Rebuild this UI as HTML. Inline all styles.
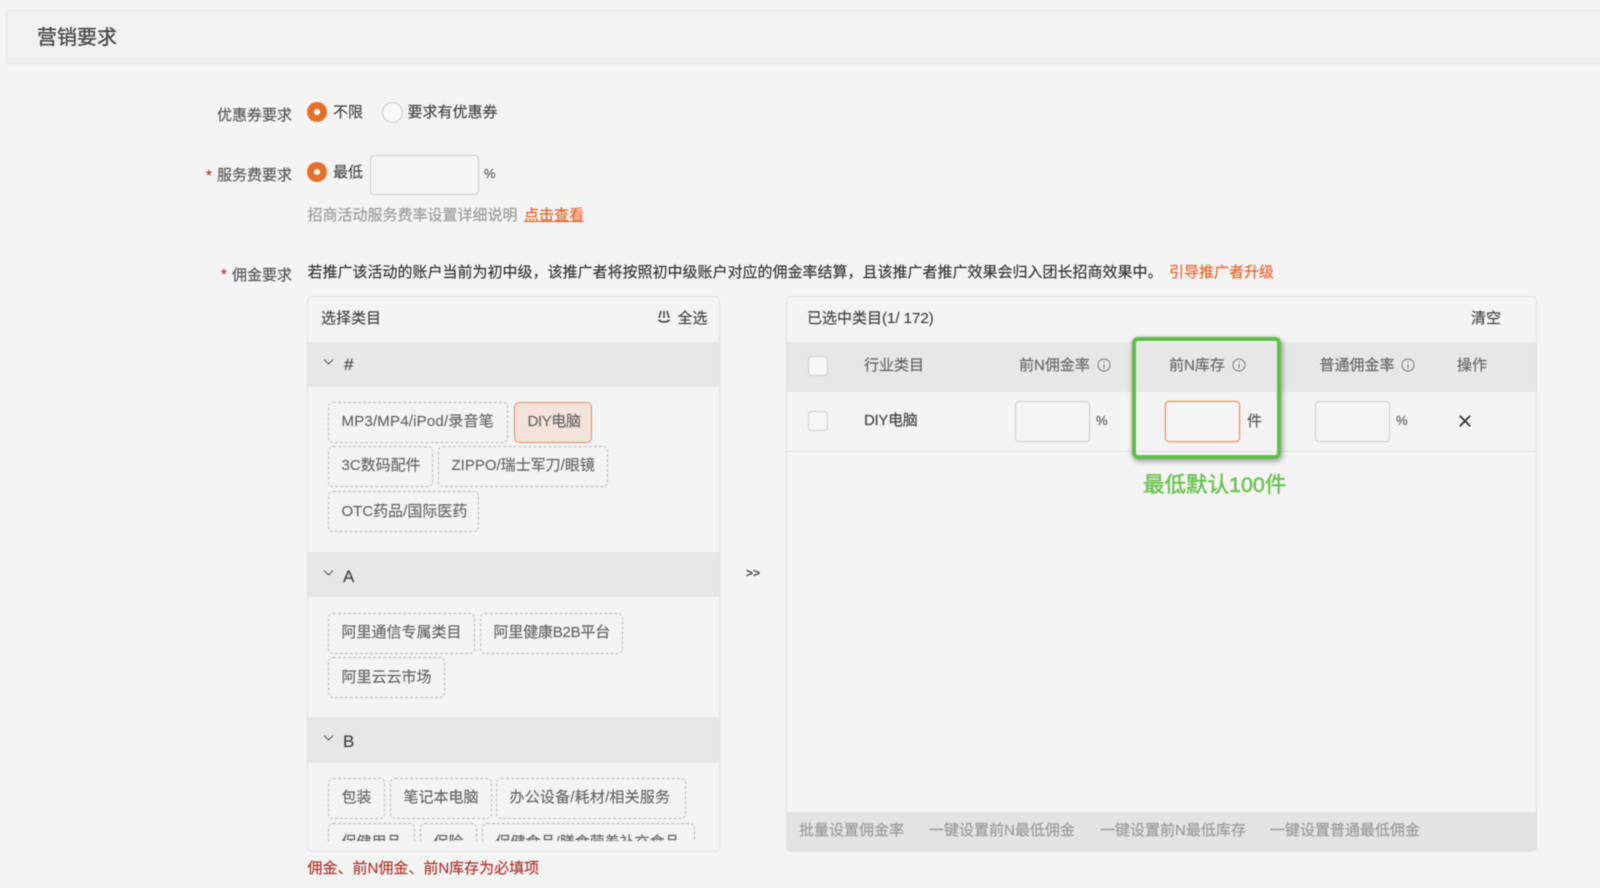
<!DOCTYPE html>
<html lang="zh">
<head>
<meta charset="utf-8">
<title>营销要求</title>
<style>
html,body{margin:0;padding:0;width:1600px;height:888px;overflow:hidden;background:#f4f4f4}
#p{position:relative;width:1600px;height:888px;overflow:hidden;background:#f4f4f4;font-family:"Liberation Sans","Noto Sans CJK SC",sans-serif;font-size:15px;color:#555;filter:blur(.4px)}
.t{position:absolute;white-space:nowrap;line-height:20px;height:20px;-webkit-text-stroke:.15px currentColor}
.b{position:absolute;box-sizing:border-box}
.hd{position:absolute;background:#e7e7e7}
.tag{position:absolute;box-sizing:border-box;height:41px;line-height:38px;border:1px dashed #b8b8b8;border-radius:5px;padding-left:12.5px;color:#666;white-space:nowrap;overflow:hidden;-webkit-text-stroke:.15px currentColor}
.inp{position:absolute;box-sizing:border-box;border:1px solid #cfcfd4;border-radius:4px;background:#f5f5f5;height:41px;width:75px}
.cb{position:absolute;box-sizing:border-box;width:20px;height:20px;border:1px solid #cfcfd4;border-radius:4px;background:#f6f6f6}
.r{position:absolute;width:20px;height:20px;border-radius:50%;background:#e4702c}
.r:after{content:"";position:absolute;left:7px;top:7px;width:6px;height:6px;border-radius:50%;background:#fff}
.st{color:#a8362d}
svg{position:absolute;overflow:visible}
</style>
</head>
<body>
<div id="p">
  <div class="b" style="left:6px;top:10px;width:1610px;height:54px;background:#f1f1f1;border:1px solid #e3e3e3;border-radius:3px"></div>
  <div class="t" style="left:37px;top:28px;font-size:20px;color:#444;-webkit-text-stroke:.3px #444">营销要求</div>

  <div class="t" style="left:217px;top:106px">优惠券要求</div>
  <div class="r" style="left:307px;top:102px"></div>
  <div class="t" style="left:333px;top:103px;color:#444">不限</div>
  <div class="b" style="left:382px;top:102px;width:21px;height:21px;border:1px solid #c8c8ce;border-radius:50%;background:#f8f8f8"></div>
  <div class="t" style="left:407.5px;top:103px;color:#444">要求有优惠券</div>

  <div class="t st" style="left:206px;top:166px">*</div>
  <div class="t" style="left:217px;top:166px">服务费要求</div>
  <div class="r" style="left:307px;top:162px"></div>
  <div class="t" style="left:333px;top:163px;color:#444">最低</div>
  <div class="inp" style="left:370px;top:155px;width:109px;height:40px"></div>
  <div class="t" style="left:484px;top:164px;font-size:13px">%</div>
  <div class="t" style="left:307.5px;top:206px;color:#999">招商活动服务费率设置详细说明</div>
  <div class="t" style="left:524px;top:206px;color:#e8622a;text-decoration:underline">点击查看</div>

  <div class="t st" style="left:221px;top:265px">*</div>
  <div class="t" style="left:232px;top:266px">佣金要求</div>
  <div class="t" style="left:307.5px;top:263px;color:#333">若推广该活动的账户当前为初中级，该推广者将按照初中级账户对应的佣金率结算，且该推广者推广效果会归入团长招商效果中。</div>
  <div class="t" style="left:1169px;top:263px;color:#e8622a">引导推广者升级</div>

  <!-- left panel -->
  <div class="b" style="left:307px;top:296px;width:413px;height:556px;border:1px solid #e2e2e2;border-radius:5px;background:#f4f4f4"></div>
  <div class="t" style="left:321px;top:309px;color:#444">选择类目</div>
  <svg style="left:657px;top:310px" width="14" height="14" viewBox="0 0 14 14" fill="none" stroke="#333" stroke-width="1.4"><path d="M4 1 L2 8 M7 1 V8 M10 1 L12 8 M1.5 10 Q7 14 12.5 10"/></svg>
  <div class="t" style="left:677.5px;top:309px;color:#444">全选</div>

  <div class="hd" style="left:308px;top:342px;width:411px;height:45px"></div>
  <svg style="left:323px;top:358px" width="11" height="8" viewBox="0 0 11 8" fill="none" stroke="#555" stroke-width="1.1"><path d="M1 1.5 L5.5 6 L10 1.5"/></svg>
  <div class="t" style="left:344px;top:355px;font-size:17px;color:#444">#</div>
  <div class="tag" style="left:328px;top:402px;width:180px;letter-spacing:.2px">MP3/MP4/iPod/录音笔</div>
  <div class="tag" style="left:514px;top:402px;width:78px;border:1px solid #e58a60;background:#f5e2da;letter-spacing:-.4px">DIY电脑</div>
  <div class="tag" style="left:328px;top:446px;width:105px">3C数码配件</div>
  <div class="tag" style="left:438px;top:446px;width:170px">ZIPPO/瑞士军刀/眼镜</div>
  <div class="tag" style="left:328px;top:491px;width:151px;line-height:40px">OTC药品/国际医药</div>

  <div class="hd" style="left:308px;top:552px;width:411px;height:45px"></div>
  <svg style="left:323px;top:569px" width="11" height="8" viewBox="0 0 11 8" fill="none" stroke="#555" stroke-width="1.1"><path d="M1 1.5 L5.5 6 L10 1.5"/></svg>
  <div class="t" style="left:343px;top:567px;font-size:17px;color:#444">A</div>
  <div class="tag" style="left:328px;top:613px;width:147px">阿里通信专属类目</div>
  <div class="tag" style="left:480px;top:613px;width:143px;letter-spacing:-.2px">阿里健康B2B平台</div>
  <div class="tag" style="left:328px;top:657px;width:117px;line-height:40px">阿里云云市场</div>

  <div class="hd" style="left:308px;top:717px;width:411px;height:46px"></div>
  <svg style="left:323px;top:734px" width="11" height="8" viewBox="0 0 11 8" fill="none" stroke="#555" stroke-width="1.1"><path d="M1 1.5 L5.5 6 L10 1.5"/></svg>
  <div class="t" style="left:343px;top:732px;font-size:17px;color:#444">B</div>
  <div class="tag" style="left:328px;top:778px;width:57px">包装</div>
  <div class="tag" style="left:390px;top:778px;width:102px">笔记本电脑</div>
  <div class="tag" style="left:496px;top:778px;width:190px;letter-spacing:.2px">办公设备/耗材/相关服务</div>
  <div class="b" style="left:308px;top:820px;width:411px;height:21px;overflow:hidden">
    <div class="tag" style="left:20px;top:3px;width:87px">保健用品</div>
    <div class="tag" style="left:112px;top:3px;width:57px">保险</div>
    <div class="tag" style="left:174px;top:3px;width:213px">保健食品/膳食营养补充食品</div>
  </div>
  <div class="t" style="left:307.5px;top:859px;color:#a8362d">佣金、前N佣金、前N库存为必填项</div>

  <div class="t" style="left:746px;top:563px;font-size:12px;font-weight:bold;color:#555">&gt;&gt;</div>

  <!-- right panel -->
  <div class="b" style="left:786px;top:296px;width:751px;height:556px;border:1px solid #e2e2e2;border-radius:5px;background:#f4f4f4"></div>
  <div class="t" style="left:807px;top:309px;color:#444">已选中类目(1/ 172)</div>
  <div class="t" style="left:1471px;top:309px;color:#444">清空</div>
  <div class="hd" style="left:787px;top:342px;width:749px;height:50px"></div>
  <div class="b" style="left:787px;top:451px;width:749px;height:1px;background:#e0e0e0"></div>
  <div class="cb" style="left:808px;top:356px"></div>
  <div class="t" style="left:864px;top:355.5px;color:#666">行业类目</div>
  <div class="t" style="left:1019px;top:355.5px;color:#666">前N佣金率</div>
  <svg style="left:1096.5px;top:357.5px" width="14" height="14" viewBox="0 0 14 14" fill="none" stroke="#777" stroke-width="1"><circle cx="7" cy="7" r="6"/><path d="M7 6 V10.5 M7 3.4 V4.8"/></svg>
  <div class="t" style="left:1169px;top:355.5px;color:#666">前N库存</div>
  <svg style="left:1231.5px;top:357.5px" width="14" height="14" viewBox="0 0 14 14" fill="none" stroke="#777" stroke-width="1"><circle cx="7" cy="7" r="6"/><path d="M7 6 V10.5 M7 3.4 V4.8"/></svg>
  <div class="t" style="left:1319.5px;top:355.5px;color:#666">普通佣金率</div>
  <svg style="left:1401px;top:357.5px" width="14" height="14" viewBox="0 0 14 14" fill="none" stroke="#777" stroke-width="1"><circle cx="7" cy="7" r="6"/><path d="M7 6 V10.5 M7 3.4 V4.8"/></svg>
  <div class="t" style="left:1457px;top:355.5px;color:#666">操作</div>

  <div class="cb" style="left:808px;top:411px"></div>
  <div class="t" style="left:864px;top:411px;color:#444;letter-spacing:-.3px">DIY电脑</div>
  <div class="inp" style="left:1015px;top:401px"></div>
  <div class="t" style="left:1096px;top:411px;font-size:13px">%</div>
  <div class="inp" style="left:1165px;top:401px;border-color:#e58a60;box-shadow:0 0 2px #f3c9b3"></div>
  <div class="t" style="left:1247px;top:411.5px;color:#555">件</div>
  <div class="inp" style="left:1315px;top:401px"></div>
  <div class="t" style="left:1396px;top:411px;font-size:13px">%</div>
  <svg style="left:1458.5px;top:414.5px" width="12" height="12" viewBox="0 0 12 12" fill="none" stroke="#333" stroke-width="1.8"><path d="M0.8 0.8 L11.2 11.2 M11.2 0.8 L0.8 11.2"/></svg>

  <div class="b" style="left:1132px;top:337px;width:149px;height:122px;border:4px solid #5fc048;border-radius:6px;box-shadow:1px 2px 6px rgba(0,0,0,.4)"></div>
  <div class="t" style="left:1143px;top:472.5px;height:24px;line-height:24px;font-size:21.5px;color:#6cc452;-webkit-text-stroke:.5px #6cc452">最低默认100件</div>

  <div class="b" style="left:787px;top:812px;width:749px;height:40px;background:#e3e3e3;border-radius:0 0 5px 5px"></div>
  <div class="t" style="left:799px;top:821px;color:#999">批量设置佣金率</div>
  <div class="t" style="left:929px;top:821px;color:#999">一键设置前N最低佣金</div>
  <div class="t" style="left:1100px;top:821px;color:#999">一键设置前N最低库存</div>
  <div class="t" style="left:1270px;top:821px;color:#999">一键设置普通最低佣金</div>
</div>
</body>
</html>
